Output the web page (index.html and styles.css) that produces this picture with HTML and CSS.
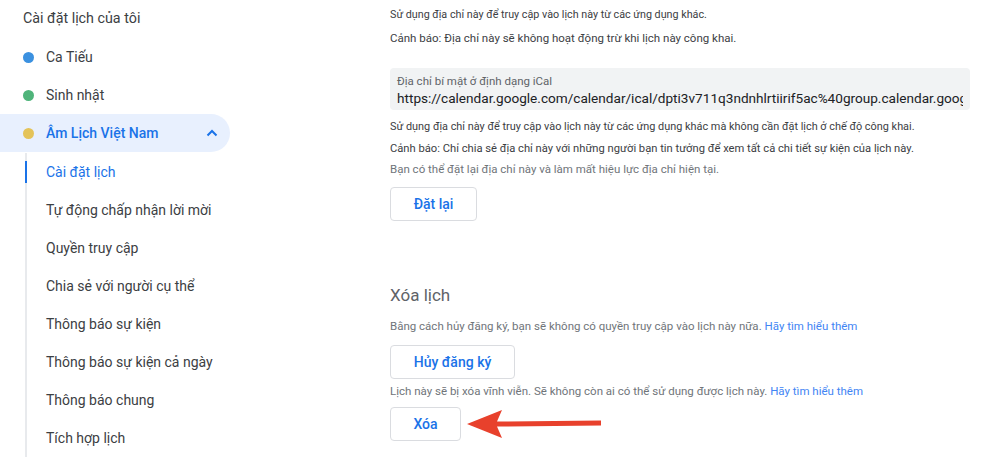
FILE: index.html
```html
<!DOCTYPE html>
<html lang="vi">
<head>
<meta charset="utf-8">
<title>Cài đặt lịch</title>
<link rel="stylesheet" href="styles.css">
</head>
<body>
<div class="page">
  <nav class="sidebar">
    <div class="side-title">Cài đặt lịch của tôi</div>
    <div class="cal-row"><span class="dot dot-blue"></span><span>Ca Tiếu</span></div>
    <div class="cal-row"><span class="dot dot-green"></span><span>Sinh nhật</span></div>
    <div class="cal-row cal-active"><span class="dot dot-yellow"></span><span class="cal-name">Âm Lịch Việt Nam</span>
      <svg class="chev" width="12" height="8" viewBox="0 0 12 8"><path d="M1.5 6.5 L6 2 L10.5 6.5" fill="none" stroke="#1a73e8" stroke-width="2"/></svg>
    </div>
    <ul class="sub">
      <li class="sub-item sub-active">Cài đặt lịch</li>
      <li class="sub-item">Tự động chấp nhận lời mời</li>
      <li class="sub-item">Quyền truy cập</li>
      <li class="sub-item">Chia sẻ với người cụ thể</li>
      <li class="sub-item">Thông báo sự kiện</li>
      <li class="sub-item">Thông báo sự kiện cả ngày</li>
      <li class="sub-item">Thông báo chung</li>
      <li class="sub-item">Tích hợp lịch</li>
    </ul>
  </nav>
  <main class="main">
    <p class="txt t1">Sử dụng địa chỉ này để truy cập vào lịch này từ các ứng dụng khác.</p>
    <p class="txt t2">Cảnh báo: Địa chỉ này sẽ không hoạt động trừ khi lịch này công khai.</p>
    <div class="field">
      <div class="field-label">Địa chỉ bí mật ở định dạng iCal</div>
      <div class="field-value">https://calendar.google.com/calendar/ical/dpti3v711q3ndnhlrtiirif5ac%40group.calendar.google.com/private/basic.ics</div>
    </div>
    <p class="txt t3">Sử dụng địa chỉ này để truy cập vào lịch này từ các ứng dụng khác mà không cần đặt lịch ở chế độ công khai.</p>
    <p class="txt t4">Cảnh báo: Chỉ chia sẻ địa chỉ này với những người bạn tin tưởng để xem tất cả chi tiết sự kiện của lịch này.</p>
    <p class="txt muted t5">Bạn có thể đặt lại địa chỉ này và làm mất hiệu lực địa chỉ hiện tại.</p>
    <button class="btn btn-reset">Đặt lại</button>
    <h2 class="heading">Xóa lịch</h2>
    <p class="txt muted t6">Bằng cách hủy đăng ký, bạn sẽ không có quyền truy cập vào lịch này nữa. <a class="link">Hãy tìm hiểu thêm</a></p>
    <button class="btn btn-unsub">Hủy đăng ký</button>
    <p class="txt muted t7">Lịch này sẽ bị xóa vĩnh viễn. Sẽ không còn ai có thể sử dụng được lịch này. <a class="link">Hãy tìm hiểu thêm</a></p>
    <div class="del-row">
      <button class="btn btn-del">Xóa</button>
      <svg class="arrow" width="136" height="30" viewBox="0 0 136 30"><path d="M0 15 L35 1 L30 12.5 L134 11.5 L134 16.5 L30 17.5 L35 29 Z" fill="#e8412c"/></svg>
    </div>
  </main>
</div>
</body>
</html>
```

FILE: styles.css
```css
* { box-sizing: border-box; }
html, body { margin: 0; padding: 0; background: #fff; }
body { font-family: Roboto, "Noto Sans", Arial, sans-serif; color: #3c4043; overflow: hidden; height: 462px; }
.page { display: grid; grid-template-columns: 230px 1fr; }
.sidebar { display: flex; flex-direction: column; }
.side-title { height: 38px; padding-left: 23px; font-size: 14.3px; line-height: 37px; color: #3c4043; }
.cal-row { height: 38px; display: flex; align-items: center; padding-left: 23px; font-size: 14px; color: #3c4043; border-radius: 0 19px 19px 0; }
.dot { width: 11px; height: 11px; border-radius: 50%; margin-right: 12px; flex: none; }
.dot-blue { background: #3b91e0; }
.dot-green { background: #4fb47a; }
.dot-yellow { background: #e4c359; }
.cal-active { background: #e8f0fe; color: #1a73e8; font-weight: 500; }
.cal-name { flex: 1; }
.chev { margin-right: 12px; }
.sub { list-style: none; margin: 1px 0 0 25px; padding: 0; border-left: 2px solid #e8eaed; }
.sub-item { height: 38px; line-height: 38px; padding-left: 19px; font-size: 14px; color: #3c4043; position: relative; }
.sub-active { color: #1a73e8; }
.sub-active::before { content: ""; position: absolute; left: -2px; top: 8px; width: 2px; height: 22px; background: #1a73e8; }
.main { padding-left: 160px; padding-top: 6px; }
.txt { margin: 0; font-size: 11.5px; line-height: 18px; color: #3c4043; white-space: nowrap; }
.muted { color: #70757a; }
.t1 { font-size: 10.75px; }
.t2 { margin-top: 5px; }
.field { margin-top: 21px; width: 580px; height: 42px; background: #f1f3f4; border-radius: 4px; padding: 6px 7px 0; overflow: hidden; }
.field-label { font-size: 11.5px; line-height: 15px; color: #5f6368; }
.field-value { font-size: 13.6px; line-height: 19px; color: #202124; white-space: nowrap; overflow: hidden; }
.t3 { margin-top: 8px; font-size: 10.9px; }
.t4 { margin-top: 4px; font-size: 11.2px; }
.t5 { margin-top: 2px; }
.btn { display: block; font-family: inherit; background: #fff; border: 1px solid #dadce0; border-radius: 4px; color: #1a73e8; font-size: 14px; font-weight: 500; height: 34px; padding: 0; }
.btn-reset { margin-top: 9px; width: 87px; }
.heading { margin: 62px 0 0; font-size: 17px; font-weight: 400; line-height: 24px; color: #5f6368; }
.t6 { margin-top: 10px; }
.link { color: #4285f4; }
.btn-unsub { margin-top: 10px; width: 125px; }
.t7 { margin-top: 3px; }
.del-row { display: flex; align-items: center; margin-top: 7px; }
.btn-del { width: 71px; }
.arrow { margin-left: 6px; }
```
